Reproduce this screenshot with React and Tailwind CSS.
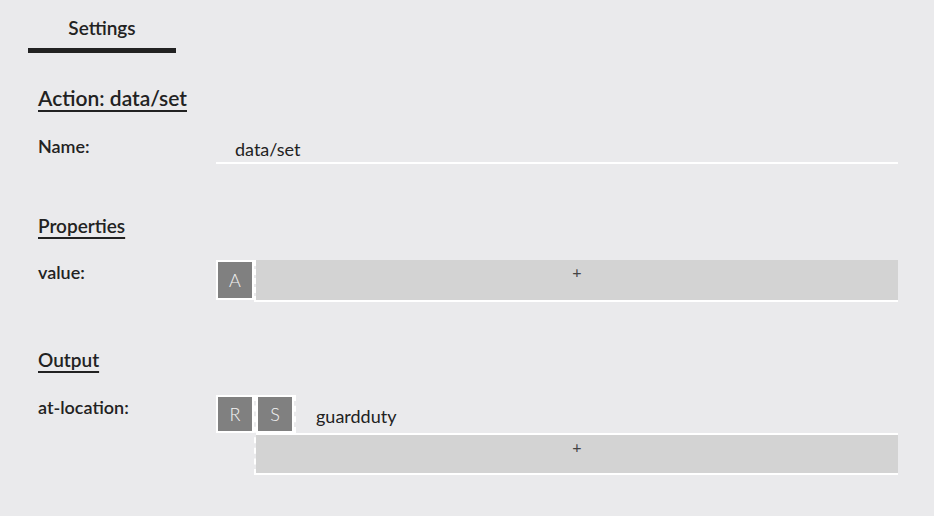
function Badge({ letter, tall }) {
  return (
    <div
      className={`${tall ? 'h-[40px]' : 'h-[38px]'} w-[38px] shrink-0 border-2 border-white bg-[#808080] flex items-center justify-center text-[18px] font-light text-[#f4f4f4]`}
    >
      {letter}
    </div>
  )
}

function AddSlot({ tall }) {
  return (
    <div
      className={`${tall ? 'h-[42px]' : 'h-[40px]'} bg-[#d3d3d3] border-b-2 border-white text-center text-[16px] leading-6 text-[#444]`}
    >
      +
    </div>
  )
}

export default function App() {
  return (
    <div className="min-h-[516px] w-full bg-[#eaeaec] text-[#222] font-['Lato',sans-serif]">
      <div className="ml-[28px] w-[148px] pt-[15px] pb-[8px] border-b-[5px] border-[#222] text-center text-[19px] leading-[25px] font-semibold">
        Settings
      </div>

      <div className="pl-[38px] pr-[36px]">
        <h2 className="mt-[32px] text-[21px] leading-[26px] font-semibold underline underline-offset-[4px] decoration-2">
          Action: data/set
        </h2>

        <div className="mt-[23px] flex">
          <div className="w-[178px] shrink-0 text-[18px] leading-6 font-semibold">Name:</div>
          <div className="flex-1 h-[30px] border-b-2 border-white pl-[19px] text-[18px] leading-[30px]">
            data/set
          </div>
        </div>

        <h2 className="mt-[49px] text-[19px] leading-[26px] font-semibold underline underline-offset-[4px] decoration-2">
          Properties
        </h2>

        <div className="mt-[21px] flex">
          <div className="w-[178px] shrink-0 text-[18px] leading-6 font-semibold">value:</div>
          <div className="flex-1 flex items-start">
            <Badge letter="A" tall />
            <div className="flex-1 border-l-2 border-dashed border-white">
              <AddSlot tall />
            </div>
          </div>
        </div>

        <h2 className="mt-[45px] text-[19px] leading-[26px] font-semibold underline underline-offset-[4px] decoration-2">
          Output
        </h2>

        <div className="mt-[22px] flex">
          <div className="w-[178px] shrink-0 text-[18px] leading-6 font-semibold">at-location:</div>
          <div className="flex-1 flex items-start">
            <Badge letter="R" />
            <div className="flex-1 border-l-2 border-dashed border-white">
              <div className="flex border-b-2 border-white">
                <Badge letter="S" />
                <div className="flex-1 border-l-2 border-dashed border-white pl-[20px] pt-[4px] text-[18px] leading-[34px]">
                  guardduty
                </div>
              </div>
              <AddSlot />
            </div>
          </div>
        </div>
      </div>
    </div>
  )
}
